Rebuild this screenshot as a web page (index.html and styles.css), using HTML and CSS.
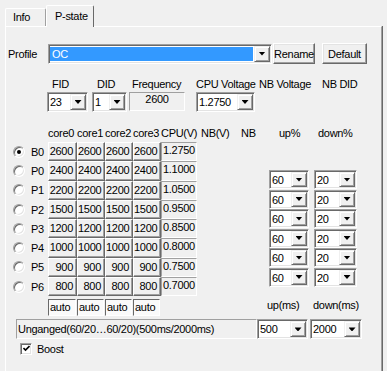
FILE: index.html
```html
<!DOCTYPE html>
<html>

<head>
    <title>P-state</title>
    <link rel="stylesheet" href="styles.css">
</head>

<body>
    <div class="tabs">
        <div class="tab">Info</div>
        <div class="tab active">P-state</div>
    </div>

    <div class="panel">
        <!-- Profile selection -->
        <div class="profile-row">
            <span class="profile-lbl">Profile</span>
            <div class="combo combo-profile"><span class="val sel">OC</span><span class="drop"><i class="arrow"></i></span></div>
            <button class="btn btn-rename">Rename</button>
            <button class="btn btn-default">Default</button>
        </div>

        <!-- Current state fields -->
        <div class="fields">
            <div class="field f-fid">
                <span class="flbl">FID</span>
                <div class="combo"><span class="val">23</span><span class="drop"><i class="arrow"></i></span></div>
            </div>
            <div class="field f-did">
                <span class="flbl">DID</span>
                <div class="combo"><span class="val">1</span><span class="drop"><i class="arrow"></i></span></div>
            </div>
            <div class="field f-freq">
                <span class="flbl">Frequency</span>
                <div class="freq">2600</div>
            </div>
            <div class="field f-cpuv">
                <span class="flbl">CPU Voltage</span>
                <div class="combo"><span class="val">1.2750</span><span class="drop"><i class="arrow"></i></span></div>
            </div>
            <div class="field f-nbv">
                <span class="flbl">NB Voltage</span>
            </div>
            <div class="field f-nbdid">
                <span class="flbl">NB DID</span>
            </div>
        </div>

        <!-- P-state table -->
        <div class="state-head">
            <span class="w29">core0</span>
            <span class="w28">core1</span>
            <span class="w28">core2</span>
            <span class="w28">core3</span>
            <span class="w40">CPU(V)</span>
            <span class="w40">NB(V)</span>
            <span class="w38">NB</span>
            <span class="w39">up%</span>
            <span>down%</span>
        </div>

        <div class="states">
            <div class="grid">
                <span class="radio on"></span><span class="pname">B0</span>
                <span class="cell">2600</span><span class="cell">2600</span><span class="cell">2600</span><span class="cell">2600</span>
                <span class="volt">1.2750</span>

                <span class="radio"></span><span class="pname">P0</span>
                <span class="cell">2400</span><span class="cell">2400</span><span class="cell">2400</span><span class="cell">2400</span>
                <span class="volt">1.1000</span>

                <span class="radio"></span><span class="pname">P1</span>
                <span class="cell">2200</span><span class="cell">2200</span><span class="cell">2200</span><span class="cell">2200</span>
                <span class="volt">1.0500</span>

                <span class="radio"></span><span class="pname">P2</span>
                <span class="cell">1500</span><span class="cell">1500</span><span class="cell">1500</span><span class="cell">1500</span>
                <span class="volt">0.9500</span>

                <span class="radio"></span><span class="pname">P3</span>
                <span class="cell">1200</span><span class="cell">1200</span><span class="cell">1200</span><span class="cell">1200</span>
                <span class="volt">0.8500</span>

                <span class="radio"></span><span class="pname">P4</span>
                <span class="cell">1000</span><span class="cell">1000</span><span class="cell">1000</span><span class="cell">1000</span>
                <span class="volt">0.8000</span>

                <span class="radio"></span><span class="pname">P5</span>
                <span class="cell">900</span><span class="cell">900</span><span class="cell">900</span><span class="cell">900</span>
                <span class="volt">0.7500</span>

                <span class="radio"></span><span class="pname">P6</span>
                <span class="cell">800</span><span class="cell">800</span><span class="cell">800</span><span class="cell">800</span>
                <span class="volt">0.7000</span>

                <span></span><span></span>
                <span class="auto">auto</span><span class="auto">auto</span><span class="auto">auto</span><span class="auto">auto</span>
                <span></span>
            </div>

            <div class="ratios">
                <div class="ratio-row">
                    <div class="combo c-up"><span class="val">60</span><span class="drop"><i class="arrow"></i></span></div>
                    <div class="combo c-down"><span class="val">20</span><span class="drop"><i class="arrow"></i></span></div>
                </div>
                <div class="ratio-row">
                    <div class="combo c-up"><span class="val">60</span><span class="drop"><i class="arrow"></i></span></div>
                    <div class="combo c-down"><span class="val">20</span><span class="drop"><i class="arrow"></i></span></div>
                </div>
                <div class="ratio-row">
                    <div class="combo c-up"><span class="val">60</span><span class="drop"><i class="arrow"></i></span></div>
                    <div class="combo c-down"><span class="val">20</span><span class="drop"><i class="arrow"></i></span></div>
                </div>
                <div class="ratio-row">
                    <div class="combo c-up"><span class="val">60</span><span class="drop"><i class="arrow"></i></span></div>
                    <div class="combo c-down"><span class="val">20</span><span class="drop"><i class="arrow"></i></span></div>
                </div>
                <div class="ratio-row">
                    <div class="combo c-up"><span class="val">60</span><span class="drop"><i class="arrow"></i></span></div>
                    <div class="combo c-down"><span class="val">20</span><span class="drop"><i class="arrow"></i></span></div>
                </div>
                <div class="ratio-row">
                    <div class="combo c-up"><span class="val">60</span><span class="drop"><i class="arrow"></i></span></div>
                    <div class="combo c-down"><span class="val">20</span><span class="drop"><i class="arrow"></i></span></div>
                </div>
                <div class="ms-labels">
                    <span class="ms-up">up(ms)</span>
                    <span>down(ms)</span>
                </div>
            </div>
        </div>

        <div class="bottom-row">
            <div class="summary">Unganged(60/20…60/20)(500ms/2000ms)</div>
            <div class="combo c-ms-up"><span class="val">500</span><span class="drop"><i class="arrow"></i></span></div>
            <div class="combo c-ms-down"><span class="val">2000</span><span class="drop"><i class="arrow"></i></span></div>
        </div>

        <label class="boost">
            <span class="check">
                <svg width="7" height="7" viewBox="0 0 7 7"><polyline points="0.5,3 2.5,5 6.5,1" fill="none" stroke="#000" stroke-width="1.6"/></svg>
            </span>
            Boost
        </label>
    </div>
</body>

</html>
```

FILE: styles.css
```css
body {
    margin: 0;
    width: 387px;
    height: 371px;
    overflow: hidden;
    background: #f0f0f0;
    font: 11px "Liberation Sans", Arial, sans-serif;
    letter-spacing: -0.3px;
    color: #000;
}

/* tab strip */
.tabs {
    display: flex;
    align-items: flex-end;
    height: 26px;
    padding-left: 5px;
}

.tab {
    box-sizing: border-box;
    width: 41px;
    height: 18px;
    padding-left: 7px;
    line-height: 16px;
    border-top: 1px solid #fff;
    border-left: 1px solid #fff;
    border-right: 1px solid #a0a0a0;
    border-radius: 2px 2px 0 0;
}

.tab.active {
    position: relative;
    z-index: 1;
    width: 48px;
    height: 22px;
    margin-bottom: -1px;
    padding-left: 8px;
    line-height: 20px;
    background: #f0f0f0;
    border-right: 1px solid #696969;
}

.panel {
    height: 350px;
    margin: 0 5px;
    border-top: 1px solid #fff;
    border-left: 1px solid #fff;
    border-right: 1px solid #a0a0a0;
    box-shadow: 1px 0 0 #696969;
}

/* classic controls */
.combo {
    box-sizing: border-box;
    display: flex;
    height: 20px;
    padding: 1px;
    background: #fff;
    border: 1px solid;
    border-color: #a0a0a0 #fff #fff #a0a0a0;
    box-shadow: inset 1px 1px #696969, inset -1px -1px #e3e3e3;
}

.combo .val {
    flex: 1;
    padding-left: 1px;
    line-height: 16px;
    white-space: nowrap;
}

.combo .drop {
    box-sizing: border-box;
    display: flex;
    align-items: center;
    justify-content: center;
    width: 16px;
    background: #f0f0f0;
    border: 1px solid;
    border-color: #f0f0f0 #696969 #696969 #f0f0f0;
    box-shadow: inset 1px 1px #fff, inset -1px -1px #a0a0a0;
}

.arrow {
    width: 7px;
    height: 4px;
    background: #000;
    clip-path: polygon(0 0, 100% 0, 50% 100%);
}

.btn {
    box-sizing: border-box;
    height: 21px;
    padding: 0;
    font: inherit;
    letter-spacing: inherit;
    color: #000;
    background: #f0f0f0;
    border: 1px solid;
    border-color: #fff #696969 #696969 #fff;
    box-shadow: inset -1px -1px #a0a0a0, inset 1px 1px #e3e3e3;
    white-space: nowrap;
}

/* profile row */
.profile-row {
    display: flex;
    align-items: center;
    height: 21px;
    margin-top: 16px;
}

.profile-lbl {
    width: 40px;
    padding-left: 2px;
}

.combo-profile {
    width: 224px;
}

.combo .sel {
    margin: 1px 1px 1px 0;
    padding-left: 2px;
    line-height: 14px;
    background: #3399ff;
    color: #fff;
}

.btn-rename {
    width: 42px;
    margin-left: 1px;
}

.btn-default {
    width: 45px;
    margin-left: 7px;
}

/* current state fields */
.fields {
    display: flex;
    margin-top: 14px;
    padding-left: 41px;
}

.field {
    display: flex;
    flex-direction: column;
    gap: 1px;
}

.flbl {
    height: 13px;
    line-height: 13px;
    white-space: nowrap;
}

.f-fid { width: 41px; margin-right: 4px; }
.f-did { width: 35px; margin-right: 2px; }
.f-fid .flbl,
.f-did .flbl { padding-left: 5px; }
.f-freq { width: 56px; margin-right: 11px; }
.f-freq .flbl { padding-left: 3px; }
.f-cpuv { width: 59px; margin-right: 4px; }
.f-nbv { width: 63px; }

.freq {
    box-sizing: border-box;
    height: 19px;
    line-height: 12px;
    text-align: center;
    border: 1px solid;
    border-color: #a0a0a0 #fff #fff #a0a0a0;
}

/* p-state table */
.state-head {
    display: flex;
    height: 13px;
    line-height: 13px;
    margin-top: 15px;
    padding-left: 42px;
    white-space: nowrap;
}

.w28 { width: 28px; }
.w29 { width: 29px; }
.w38 { width: 38px; }
.w39 { width: 39px; }
.w40 { width: 40px; }

.states {
    display: flex;
    margin-top: 2px;
}

.grid {
    display: grid;
    grid-template-columns: 19px 23px 29px 28px 28px 28px 36px;
    grid-template-rows: repeat(8, 19.3px) 20px;
}

.radio {
    position: relative;
    box-sizing: border-box;
    align-self: center;
    width: 12px;
    height: 12px;
    margin-left: 7px;
    border-radius: 50%;
    background: #fff;
    border: 1px solid;
    border-color: #a0a0a0 #fff #fff #a0a0a0;
    box-shadow: inset 1px 1px #696969, inset -1px -1px #e3e3e3;
}

.radio.on::after {
    content: "";
    position: absolute;
    left: 3px;
    top: 3px;
    width: 4px;
    height: 4px;
    border-radius: 50%;
    background: #000;
}

.pname {
    align-self: center;
    padding-left: 6px;
}

.cell {
    box-sizing: border-box;
    padding-right: 3px;
    line-height: 17px;
    text-align: right;
    border: 1px solid;
    border-color: #fff #696969 #696969 #fff;
    box-shadow: inset -1px -1px #a0a0a0;
}

.volt {
    box-sizing: border-box;
    padding-left: 1px;
    line-height: 14px;
    border: 1px solid;
    border-color: #a0a0a0 #fff #fff #a0a0a0;
}

.auto {
    box-sizing: border-box;
    height: 17px;
    margin: 3px 1px 0 0;
    padding-left: 1px;
    line-height: 15px;
    background: #fafafa;
    border: 1px solid;
    border-color: #696969 #fff #fff #696969;
}

.ratios {
    margin-left: 72px;
    padding-top: 28px;
}

.ratio-row {
    display: flex;
    height: 19.5px;
}

.ratio-row .combo {
    height: 19px;
}

.c-up { width: 40px; margin-right: 5px; }
.c-down { width: 43px; }

.ms-labels {
    display: flex;
    height: 13px;
    line-height: 13px;
    margin: 12px 0 0 -2px;
    white-space: nowrap;
}

.ms-up {
    width: 46px;
}

/* summary row */
.bottom-row {
    display: flex;
    height: 20px;
    margin-top: 3px;
    padding-left: 10px;
}

.summary {
    box-sizing: border-box;
    width: 241px;
    padding-left: 1px;
    line-height: 18px;
    white-space: nowrap;
    overflow: hidden;
    border: 1px solid;
    border-color: #a0a0a0 #fff #fff #a0a0a0;
}

.c-ms-up { width: 51px; }
.c-ms-down { width: 52px; margin-left: 2px; }

.boost {
    display: flex;
    align-items: center;
    gap: 5px;
    height: 13px;
    margin-top: 3px;
    padding-left: 14px;
}

.check {
    box-sizing: border-box;
    display: flex;
    align-items: center;
    justify-content: center;
    width: 12px;
    height: 12px;
    background: #fff;
    border: 1px solid;
    border-color: #a0a0a0 #fff #fff #a0a0a0;
    box-shadow: inset 1px 1px #696969, inset -1px -1px #e3e3e3;
}
```
